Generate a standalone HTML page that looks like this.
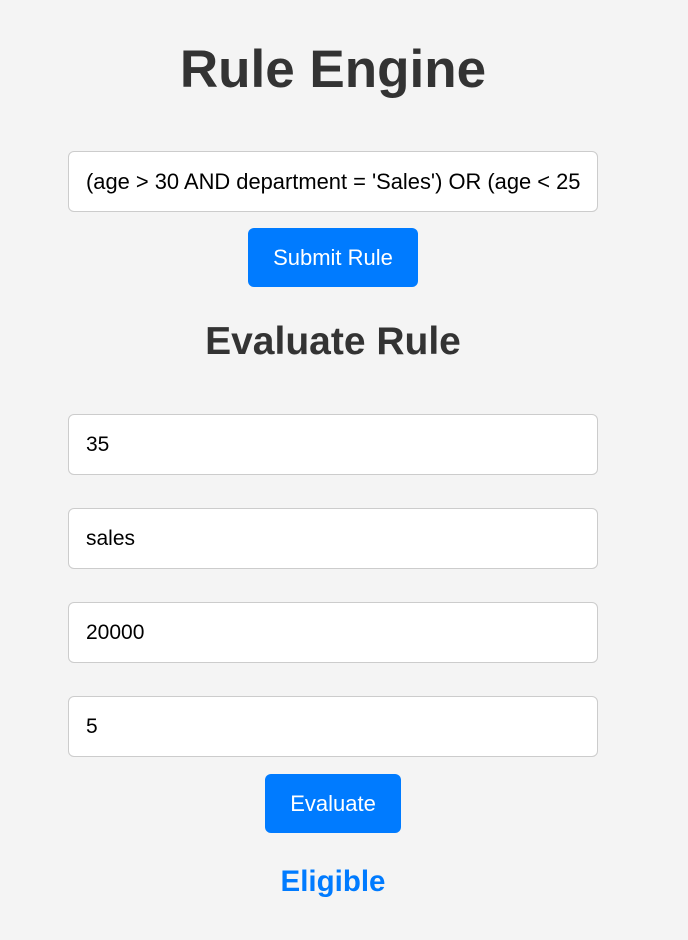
<!DOCTYPE html>
<html><head><meta charset="utf-8"><style>
html,body{margin:0;padding:0;background:#f4f4f4;font-family:"Liberation Sans",Arial,sans-serif;}
body{width:688px;height:940px;position:relative;overflow:hidden;}
.c{position:absolute;left:0;width:666px;text-align:center;}
h1{margin:0;font-size:53px;font-weight:bold;color:#333;}
h2{margin:0;font-size:39px;font-weight:bold;color:#333;}
.in{position:absolute;left:68px;height:59px;background:#fff;border:1px solid #ccc;border-radius:6px;font-size:21px;color:#000;line-height:59px;padding:0 15px 0 17px;width:496px;white-space:nowrap;overflow:hidden;}
.in span{display:block;width:496px;overflow:hidden;}
.btn{position:absolute;background:#007bff;color:#fff;border-radius:6px;font-size:22px;text-align:center;}
.res{font-size:29.5px;font-weight:bold;color:#007bff;}
</style></head><body>
<div class="c" style="top:38px;line-height:64px"><h1>Rule Engine</h1></div>
<div class="in" style="top:151px;font-size:21.9px"><span>(age &gt; 30 AND department = 'Sales') OR (age &lt; 25 AND department = 'Marketing')</span></div>
<div class="btn" style="left:248px;top:228px;width:170px;height:59px;line-height:59px">Submit Rule</div>
<div class="c" style="top:318px;line-height:48px"><h2>Evaluate Rule</h2></div>
<div class="in" style="top:414px"><span>35</span></div>
<div class="in" style="top:508px"><span>sales</span></div>
<div class="in" style="top:602px"><span>20000</span></div>
<div class="in" style="top:696px"><span>5</span></div>
<div class="btn" style="left:265px;top:774px;width:136px;height:59px;line-height:59px">Evaluate</div>
<div class="c res" style="top:864px;line-height:36px">Eligible</div>
</body></html>
